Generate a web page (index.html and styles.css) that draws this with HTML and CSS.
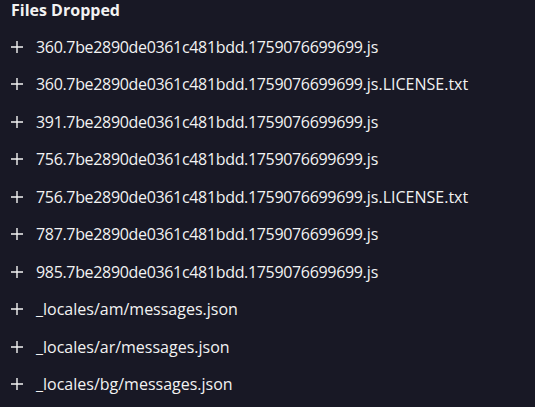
FILE: index.html
```html
<!DOCTYPE html>
<html>
<head>
<meta charset="utf-8">
<link rel="stylesheet" href="styles.css">
</head>
<body>
<div class="panel">
  <h3 class="title">Files Dropped</h3>
  <ul class="list">
    <li class="item"><svg class="plus" viewBox="0 0 12 12"><path d="M6 0V12M0 6H12"/></svg><span class="name"><span class="hash">360.7be2890de0361c481bdd.1759076699699</span>.js</span></li>
    <li class="item"><svg class="plus" viewBox="0 0 12 12"><path d="M6 0V12M0 6H12"/></svg><span class="name"><span class="hash">360.7be2890de0361c481bdd.1759076699699</span>.js.LICENSE.txt</span></li>
    <li class="item"><svg class="plus" viewBox="0 0 12 12"><path d="M6 0V12M0 6H12"/></svg><span class="name"><span class="hash">391.7be2890de0361c481bdd.1759076699699</span>.js</span></li>
    <li class="item"><svg class="plus" viewBox="0 0 12 12"><path d="M6 0V12M0 6H12"/></svg><span class="name"><span class="hash">756.7be2890de0361c481bdd.1759076699699</span>.js</span></li>
    <li class="item"><svg class="plus" viewBox="0 0 12 12"><path d="M6 0V12M0 6H12"/></svg><span class="name"><span class="hash">756.7be2890de0361c481bdd.1759076699699</span>.js.LICENSE.txt</span></li>
    <li class="item"><svg class="plus" viewBox="0 0 12 12"><path d="M6 0V12M0 6H12"/></svg><span class="name"><span class="hash">787.7be2890de0361c481bdd.1759076699699</span>.js</span></li>
    <li class="item"><svg class="plus" viewBox="0 0 12 12"><path d="M6 0V12M0 6H12"/></svg><span class="name"><span class="hash">985.7be2890de0361c481bdd.1759076699699</span>.js</span></li>
    <li class="item"><svg class="plus" viewBox="0 0 12 12"><path d="M6 0V12M0 6H12"/></svg><span class="name">_locales/am/messages.json</span></li>
    <li class="item"><svg class="plus" viewBox="0 0 12 12"><path d="M6 0V12M0 6H12"/></svg><span class="name">_locales/ar/messages.json</span></li>
    <li class="item"><svg class="plus" viewBox="0 0 12 12"><path d="M6 0V12M0 6H12"/></svg><span class="name">_locales/bg/messages.json</span></li>
  </ul>
</div>
</body>
</html>
```
FILE: styles.css
```css
html, body {
  margin: 0;
  padding: 0;
  background: #181825;
}
body {
  width: 535px;
  height: 407px;
  overflow: hidden;
  font-family: "Open Sans", sans-serif;
  color: #f2f2f2;
}
.panel {
  padding: 0 0 0 11px;
}
.title {
  margin: 0;
  font-size: 16px;
  font-weight: 700;
  line-height: 20px;
}
.list {
  list-style: none;
  margin: 0;
  padding: 8px 0 0 0;
}
.item {
  display: flex;
  align-items: center;
  height: 37.5px;
  font-size: 16px;
}
.hash {
  letter-spacing: -0.33px;
}
.plus {
  width: 12px;
  height: 12px;
  flex: none;
  margin-right: 13px;
  stroke: #f2f2f2;
  stroke-width: 1.4;
  fill: none;
}
```
